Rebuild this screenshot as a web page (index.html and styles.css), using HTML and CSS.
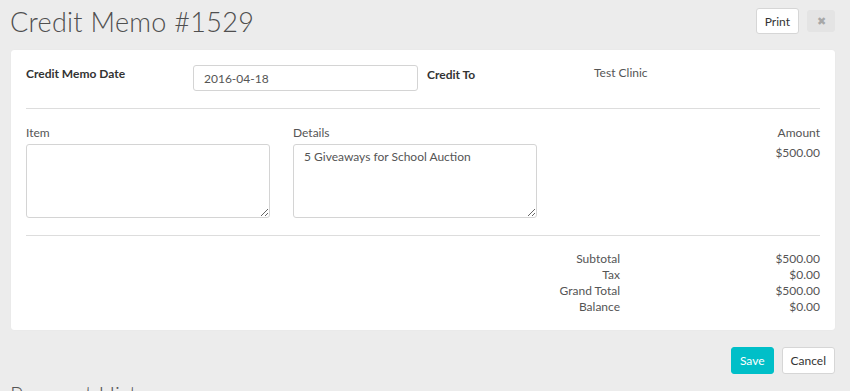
FILE: index.html
```html
<!DOCTYPE html>
<html lang="en">

<head>
    <meta charset="UTF-8">
    <meta name="viewport" content="width=device-width, initial-scale=1.0">
    <title>Credit Memo #1529</title>
    <link rel="stylesheet" href="styles.css">
</head>

<body>
    <div class="page">
        <div class="header">
            <h1 class="title">Credit Memo #1529</h1>
            <div class="header-actions">
                <button class="btn">Print</button>
                <button class="btn btn-close">&#10006;</button>
            </div>
        </div>

        <div class="card">
            <div class="meta-row">
                <div class="meta-label">Credit Memo Date</div>
                <input class="field date-field" type="text" value="2016-04-18">
                <div class="meta-label credit-to">Credit To</div>
                <div class="meta-value">Test Clinic</div>
            </div>

            <hr class="divider">

            <div class="line-row">
                <div class="line-col">
                    <label class="col-label">Item</label>
                    <textarea class="field text-field"></textarea>
                </div>
                <div class="line-col">
                    <label class="col-label">Details</label>
                    <textarea class="field text-field">5 Giveaways for School Auction</textarea>
                </div>
                <div class="amount-col">
                    <div class="col-label">Amount</div>
                    <div class="amount">$500.00</div>
                </div>
            </div>

            <hr class="divider divider-totals">

            <div class="totals">
                <div class="total-label">Subtotal</div>
                <div class="total-value">$500.00</div>
                <div class="total-label">Tax</div>
                <div class="total-value">$0.00</div>
                <div class="total-label">Grand Total</div>
                <div class="total-value">$500.00</div>
                <div class="total-label">Balance</div>
                <div class="total-value">$0.00</div>
            </div>
        </div>

        <div class="form-actions">
            <button class="btn btn-primary">Save</button>
            <button class="btn">Cancel</button>
        </div>

        <h2 class="section-title">Payment History</h2>
    </div>
</body>

</html>
```

FILE: styles.css
```css
body {
    margin: 0;
    background-color: #ececec;
    font-family: Lato, "Open Sans", sans-serif;
    font-size: 12px;
    color: #555;
}

.page {
    padding: 0 15px 0 11px;
}

.header {
    display: flex;
    justify-content: space-between;
    align-items: flex-start;
    height: 50px;
}

.title {
    margin: 5px 0 0 -1px;
    font-size: 27px;
    font-weight: 300;
    color: #4f4f4f;
    letter-spacing: 0.3px;
}

.header-actions {
    display: flex;
    align-items: center;
    gap: 8px;
    margin-top: 8px;
}

.btn {
    height: 26px;
    padding: 0 8px;
    font-family: inherit;
    font-size: 12px;
    color: #333;
    background-color: #fff;
    border: 1px solid #d6d6d6;
    border-radius: 3px;
    cursor: pointer;
}

.btn-close {
    width: 28px;
    height: 22px;
    padding: 0;
    font-size: 11px;
    color: #a8a8a8;
    background-color: #e4e4e4;
    border-color: #e4e4e4;
}

.btn-primary {
    color: #fff;
    background-color: #00bfc8;
    border-color: #00bfc8;
}

.card {
    background-color: #fff;
    border-radius: 3px;
    padding: 15px;
    box-shadow: 0 0 1px rgba(0, 0, 0, 0.08);
}

.meta-row {
    display: flex;
    align-items: flex-start;
}

.meta-label {
    width: 167px;
    padding-top: 1px;
    line-height: 16px;
    font-weight: bold;
    color: #333;
}

.credit-to {
    margin-left: 9px;
    padding-top: 2px;
}

.meta-value {
    line-height: 16px;
}

.field {
    box-sizing: border-box;
    font-family: inherit;
    font-size: 12px;
    color: #555;
    border: 1px solid #d4d4d4;
    border-radius: 3px;
    background-color: #fff;
}

.date-field {
    width: 225px;
    height: 26px;
    padding: 0 10px;
}

.divider {
    margin: 17px 0 16px;
    border: none;
    border-top: 1px solid #ddd;
}

.divider-totals {
    margin-bottom: 15px;
}

.line-row {
    display: flex;
    gap: 23px;
}

.line-col {
    display: flex;
    flex-direction: column;
    width: 244px;
}

.col-label {
    line-height: 16px;
    margin-bottom: 3px;
    color: #555;
}

.text-field {
    width: 244px;
    height: 74px;
    padding: 4px 10px;
    resize: vertical;
}

.amount-col {
    flex: 1;
    text-align: right;
}

.amount {
    line-height: 16px;
    margin-top: 4px;
}

.totals {
    display: grid;
    grid-template-columns: 1fr 200px;
    line-height: 16px;
}

.total-label,
.total-value {
    text-align: right;
}

.form-actions {
    display: flex;
    justify-content: flex-end;
    gap: 8px;
    margin-top: 17px;
}

.form-actions .btn {
    height: 27px;
}

.section-title {
    margin: 6px 0 0 -1px;
    font-size: 22px;
    font-weight: 300;
    color: #555;
}
```
